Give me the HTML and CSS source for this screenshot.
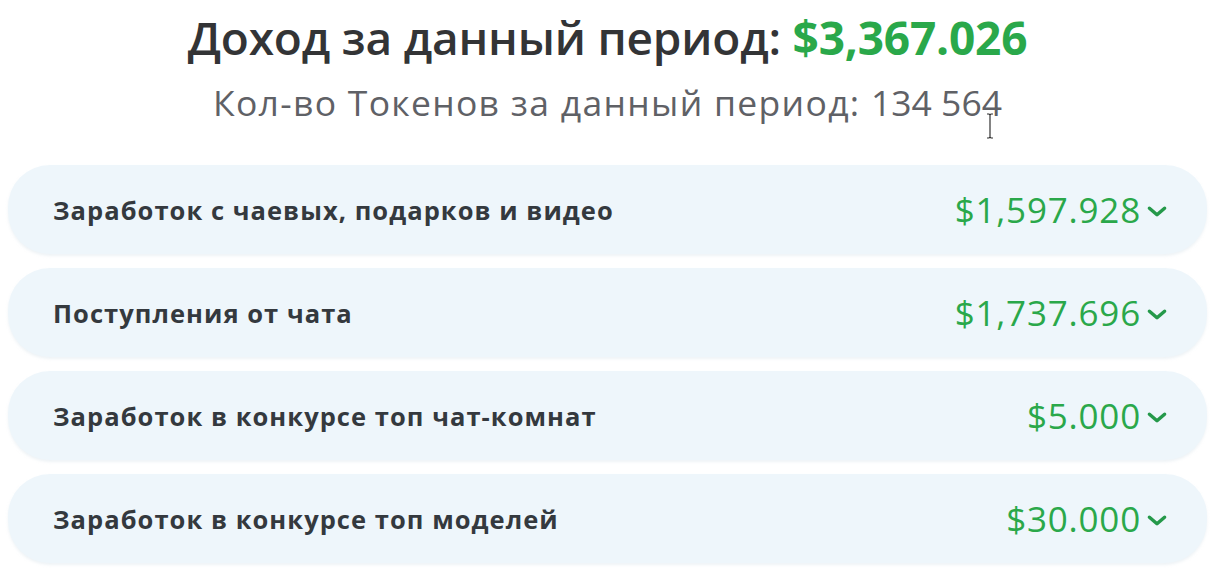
FILE: index.html
```html
<!DOCTYPE html>
<html lang="ru">
<head>
<meta charset="utf-8">
<link rel="stylesheet" href="styles.css">
</head>
<body>
<div class="page">
  <header class="head">
    <h1 class="title">Доход за данный период: <span class="green">$3,367.026</span></h1>
    <p class="subtitle">Кол-во Токенов за данный период: <span class="num">134 564</span></p>
  </header>
  <div class="list">
    <div class="card">
      <span class="label">Заработок с чаевых, подарков и видео</span>
      <span class="value">$1,597.928<svg class="chev" viewBox="0 0 20 12"><path d="M3 3l7 6 7-6" /></svg></span>
    </div>
    <div class="card">
      <span class="label">Поступления от чата</span>
      <span class="value">$1,737.696<svg class="chev" viewBox="0 0 20 12"><path d="M3 3l7 6 7-6" /></svg></span>
    </div>
    <div class="card">
      <span class="label">Заработок в конкурсе топ чат-комнат</span>
      <span class="value">$5.000<svg class="chev" viewBox="0 0 20 12"><path d="M3 3l7 6 7-6" /></svg></span>
    </div>
    <div class="card">
      <span class="label">Заработок в конкурсе топ моделей</span>
      <span class="value">$30.000<svg class="chev" viewBox="0 0 20 12"><path d="M3 3l7 6 7-6" /></svg></span>
    </div>
  </div>
  <svg class="cursor" viewBox="0 0 10 26"><path d="M2 1h2l1 1 1-1h2M5 2v22M2 25h2l1-1 1 1h2" /></svg>
</div>
</body>
</html>
```
FILE: styles.css
```css
html, body {
  margin: 0;
  padding: 0;
  background: #ffffff;
}
.page {
  position: relative;
  width: 1222px;
  height: 574px;
  font-family: "Open Sans", "Noto Sans", sans-serif;
  box-sizing: border-box;
  padding-top: 6px;
}
.head {
  padding-right: 7px;
}
.title {
  margin: 0;
  text-align: center;
  font-size: 46px;
  font-weight: 600;
  color: #333436;
  line-height: 62px;
  letter-spacing: -0.2px;
}
.green {
  color: #2aa84a;
  font-weight: 700;
}
.subtitle {
  margin: 10px 0 0 0;
  text-align: center;
  font-size: 35.5px;
  font-weight: 400;
  color: #5f6166;
  line-height: 48px;
  letter-spacing: 1.3px;
}
.num {
  letter-spacing: 0;
}
.list {
  display: flex;
  flex-direction: column;
  gap: 14px;
  padding: 39px 15px 0 8px;
}
.card {
  height: 89px;
  border-radius: 42px;
  background: #eef6fb;
  display: flex;
  align-items: center;
  justify-content: space-between;
  padding: 0 39px 0 45px;
  box-shadow: 0 2px 3px rgba(205, 220, 230, 0.35);
}
.label {
  font-size: 25.5px;
  font-weight: 700;
  color: #34393e;
  letter-spacing: 1.05px;
}
.value {
  display: flex;
  align-items: center;
  font-size: 35px;
  font-weight: 400;
  color: #2aa84a;
  letter-spacing: 0.8px;
}
.chev {
  width: 22px;
  height: 13px;
  margin-left: 5px;
  margin-top: 3px;
  fill: none;
  stroke: #25994a;
  stroke-width: 3.2;
  stroke-linecap: round;
  stroke-linejoin: round;
}
.cursor {
  position: absolute;
  left: 985px;
  top: 113px;
  width: 10px;
  height: 26px;
  fill: none;
  stroke: #333;
  stroke-width: 1.2;
}
```
